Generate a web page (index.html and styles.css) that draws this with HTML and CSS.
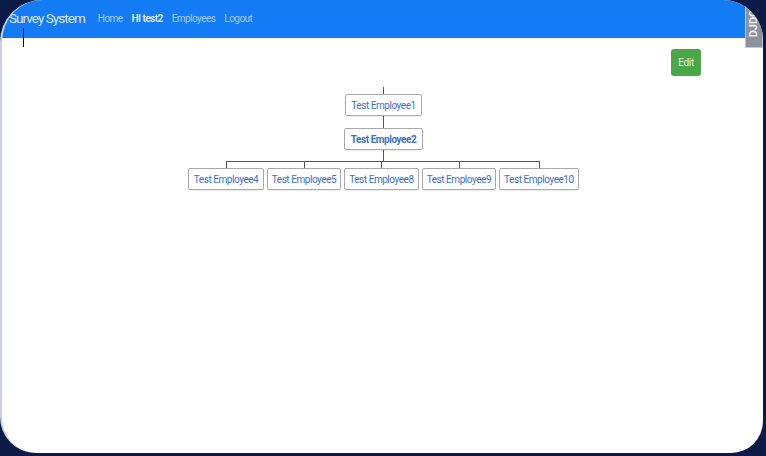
FILE: index.html
```html
<!DOCTYPE html>
<html>
<head>
<meta charset="utf-8">
<link rel="stylesheet" href="styles.css">
</head>
<body>
<div class="screen">
  <nav class="navbar">
    <span class="brand">Survey System</span>
    <a class="link">Home</a>
    <a class="link strong">HI test2</a>
    <a class="link">Employees</a>
    <a class="link">Logout</a>
  </nav>
  <div class="content">
    <div class="toolbar"><button class="edit">Edit</button></div>
    <div class="chart">
      <div class="vline"></div>
      <div class="node top">Test Employee1</div>
      <div class="vline mid"></div>
      <div class="node me">Test Employee2</div>
      <div class="vline low"></div>
      <ul class="kids">
        <li><div class="node first">Test Employee4</div></li>
        <li><div class="node">Test Employee5</div></li>
        <li><div class="node">Test Employee8</div></li>
        <li><div class="node">Test Employee9</div></li>
        <li><div class="node wide">Test Employee10</div></li>
      </ul>
    </div>
  </div>
  <div class="cursor"></div>
  <div class="tab"><span>DJDC</span></div>
</div>
</body>
</html>
```
FILE: styles.css
```css
html, body { margin: 0; padding: 0; }
body {
  width: 766px; height: 456px;
  background: #0c1b45;
  font-family: Roboto, "Liberation Sans", sans-serif;
  overflow: hidden;
}
.screen {
  position: relative;
  width: 763px; height: 453px;
  background: #fff;
  border-left: 2px solid #c8d2e4;
  box-sizing: border-box;
  border-radius: 42px 40px 32px 36px;
  overflow: hidden;
}
.navbar {
  height: 38px;
  background: #137cf5;
  display: flex;
  align-items: center;
  padding: 0 0 2px 7px;
  box-sizing: border-box;
}
.brand {
  color: #dce8fc;
  font-size: 13.5px;
  letter-spacing: -0.95px;
  margin-right: 13px;
}
.link {
  color: #a9c9f6;
  font-size: 10px;
  letter-spacing: -0.55px;
  margin-right: 9px;
}
.link.strong { color: #dbe7fc; font-weight: bold; }
.content { position: relative; }
.toolbar {
  display: flex;
  justify-content: flex-end;
  padding: 11px 62px 0 0;
  height: 27px;
}
.edit {
  width: 30px; height: 27px;
  background: #4aa747;
  border: none;
  border-radius: 3px;
  color: #e8f4e6;
  font-family: Roboto, "Liberation Sans", sans-serif;
  font-size: 10px;
  letter-spacing: -0.3px;
  padding: 0;
}
.chart {
  display: flex;
  flex-direction: column;
  align-items: center;
  margin-top: 11px;
  padding-left: 2px;
}
.vline { width: 1px; height: 7px; background: #555; }
.vline.mid { height: 12px; }
.vline.low { height: 11px; }
.node {
  border: 1px solid #a9a9a9;
  border-radius: 2px;
  height: 22px;
  line-height: 21px;
  padding: 0 4px;
  color: #3a6fcf;
  font-size: 10px;
  letter-spacing: -0.45px;
  background: #fff;
  white-space: nowrap;
  box-sizing: border-box;
  box-shadow: 0 1px 1px rgba(0,0,0,0.08);
}
.node.top { padding: 0 5.5px; }
.node.me { font-weight: bold; padding: 0 6px; }
.node.first { padding: 0 4.5px; }
.kids {
  list-style: none;
  margin: 0; padding: 0;
  display: flex;
}
.kids > li {
  position: relative;
  padding: 7px 1.5px 0;
}
.kids > li::before, .kids > li::after {
  content: '';
  position: absolute;
  top: 0;
  width: 50%;
  height: 7px;
  border-top: 1px solid #555;
  box-sizing: border-box;
}
.kids > li::before { right: 50%; }
.kids > li::after { left: 50%; border-left: 1px solid #555; }
.kids > li:first-child::before { border-top: none; }
.kids > li:last-child::after { border-top: none; }
.node.wide { padding: 0 4px; }
.cursor {
  position: absolute;
  left: 21px; top: 28px;
  width: 1px; height: 19px;
  background: #111;
}
.tab {
  position: absolute;
  right: 0; top: -2px;
  width: 18px; height: 50px;
  background: #8d919b;
  border: 1px solid #c5c8ce;
  box-sizing: border-box;
  display: flex;
  align-items: center;
  justify-content: center;
}
.tab span {
  transform: rotate(-90deg);
  color: #eef0f3;
  font-size: 11px;
  font-weight: bold;
  white-space: nowrap;
}
```
